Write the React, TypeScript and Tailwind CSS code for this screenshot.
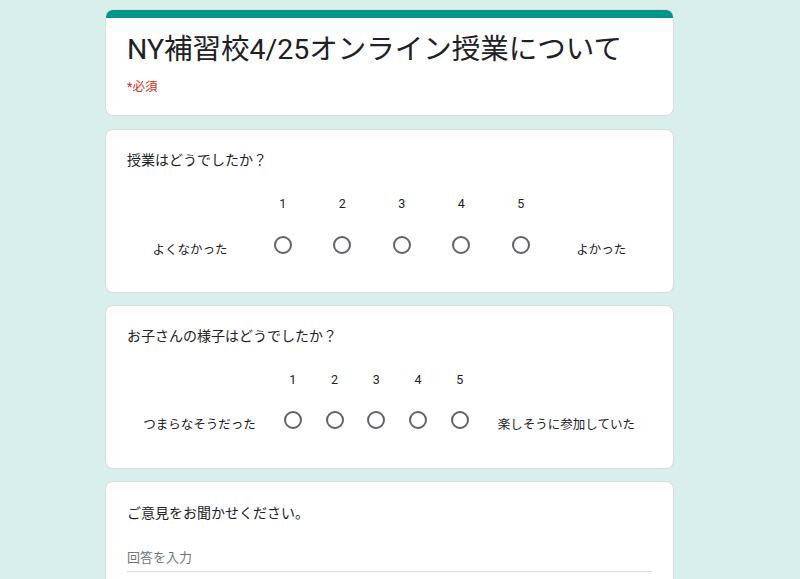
import React from "react";

const font = { fontFamily: 'Roboto, "Noto Sans CJK JP", sans-serif' };

function Scale({
  left,
  right,
  leftW,
  colW,
  question,
  gap,
  pb,
  extra,
}: {
  left: string;
  right: string;
  leftW: string;
  colW: string;
  question: string;
  gap: string;
  pb: string;
  extra?: string;
}) {
  const nums = [1, 2, 3, 4, 5];
  return (
    <div className={`bg-white rounded-lg border border-[#dadce0] pt-[20px] px-[21px] ${pb} ${extra ?? ""}`}>
      <div className="text-[14px] leading-[20px] text-[#202124]">{question}</div>
      <div className="flex mt-[26px] h-[16px]">
        <div className={leftW}></div>
        {nums.map((n) => (
          <div key={n} className={`${colW} flex justify-center text-[12.5px] leading-[16px] text-[#202124]`}>
            {n}
          </div>
        ))}
        <div className="flex-1"></div>
      </div>
      <div className={`flex ${gap}`}>
        <div className={`${leftW} pt-[6px] text-center text-[12.5px] leading-[16px] text-[#202124]`}>{left}</div>
        {nums.map((n) => (
          <div key={n} className={`${colW} flex justify-center`}>
            <div className="w-[18px] h-[18px] rounded-full border-2 border-[#5f6368]"></div>
          </div>
        ))}
        <div className="flex-1 pt-[6px] text-center text-[12.5px] leading-[16px] text-[#202124]">{right}</div>
      </div>
    </div>
  );
}

export default function App() {
  return (
    <div className="min-h-screen bg-[#d9efec] pt-[9px] pb-8" style={font}>
      <div className="ml-[105px] w-[569px] flex flex-col gap-[12px]">
        <div className="bg-white rounded-lg border border-[#dadce0] overflow-hidden">
          <div className="h-[9px] bg-[#009688] -mx-px -mt-px"></div>
          <div className="px-[21px] pt-[14px] pb-[20px]">
            <div className="text-[28.5px] leading-[36px] text-[#202124]">NY補習校4/25オンライン授業について</div>
            <div className="mt-[11px] text-[12.5px] leading-[16px] text-[#d93025]">*必須</div>
          </div>
        </div>
        <Scale
          question="授業はどうでしたか？"
          left="よくなかった"
          right="よかった"
          leftW="w-[126px]"
          colW="w-[59.5px]"
          gap="mt-[24px]"
          pb="pb-[34px]"
          extra="mt-[1px]"
        />
        <Scale
          question="お子さんの様子はどうでしたか？"
          left="つまらなそうだった"
          right="楽しそうに参加していた"
          leftW="w-[145px]"
          colW="w-[41.75px]"
          gap="mt-[23px]"
          pb="pb-[35px]"
        />
        <div className="bg-white rounded-lg border border-[#dadce0] pt-[21px] pb-[24px] px-[21px]">
          <div className="text-[14px] leading-[20px] text-[#202124]">ご意見をお聞かせください。</div>
          <div className="mt-[25px] pb-[3px] border-b border-[#dadce0] text-[13px] leading-[20px] text-[#70757a]">
            回答を入力
          </div>
        </div>
      </div>
    </div>
  );
}
